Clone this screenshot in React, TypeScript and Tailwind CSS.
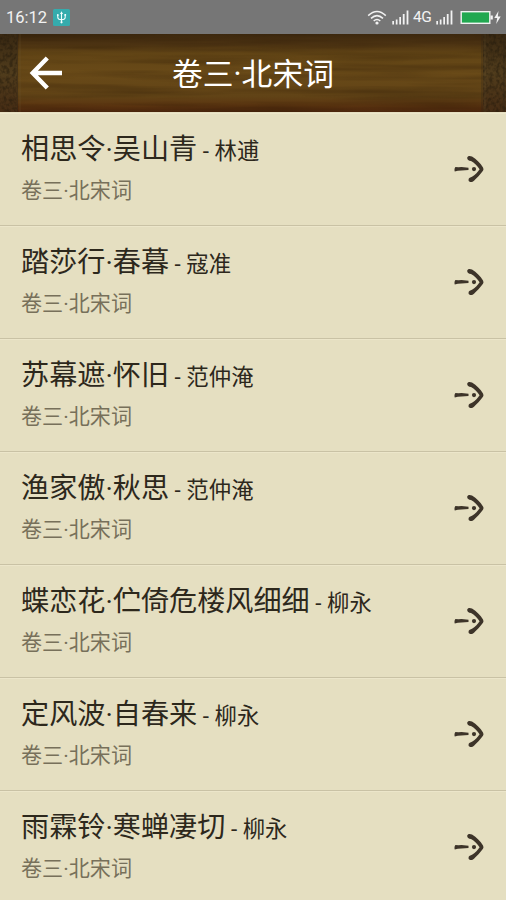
const VOLUME = "卷三·北宋词";

const POEMS = [
  { title: "相思令·吴山青", author: "林逋" },
  { title: "踏莎行·春暮", author: "寇准" },
  { title: "苏幕遮·怀旧", author: "范仲淹" },
  { title: "渔家傲·秋思", author: "范仲淹" },
  { title: "蝶恋花·伫倚危楼风细细", author: "柳永" },
  { title: "定风波·自春来", author: "柳永" },
  { title: "雨霖铃·寒蝉凄切", author: "柳永" },
];

function SignalIcon() {
  return (
    <svg width="17" height="15" viewBox="0 0 17 15" fill="#f2f2f2">
      <rect x="0.3" y="11" width="1.7" height="3.5" />
      <rect x="3.8" y="9.5" width="1.7" height="5" />
      <rect x="7.3" y="7" width="1.7" height="7.5" />
      <rect x="10.8" y="4" width="1.8" height="10.5" />
      <rect x="14.6" y="0.5" width="1.8" height="14" />
    </svg>
  );
}

function StatusBar() {
  return (
    <div className="flex h-[34px] items-center bg-[#767676] pl-1.5 pr-1 text-[#f2f2f2]">
      <span className="w-[42px] whitespace-nowrap pt-[3px] text-[16.5px] leading-none">16:12</span>
      <svg className="ml-[5px] mt-px" width="17" height="17" viewBox="0 0 17 17" fill="none" stroke="#f4ffff" strokeWidth="1.1">
        <rect width="17" height="17" rx="1.5" fill="#35acad" stroke="none" />
        <path d="M8.5 4v9.5M4.8 6v2.2q0 2.3 3.7 2.6M12.2 6v2.2q0 2.3-3.7 2.6" />
        <path d="M8.5 2.3 10 5H7z" fill="#f4ffff" stroke="none" />
        <circle cx="4.8" cy="6" r="0.9" fill="#f4ffff" stroke="none" />
        <rect x="11.4" y="5" width="1.7" height="1.7" fill="#f4ffff" stroke="none" />
        <circle cx="8.5" cy="13.3" r="1.1" fill="#f4ffff" stroke="none" />
      </svg>
      <div className="ml-auto flex items-center">
        <svg width="20" height="15" viewBox="0 0 20 15" fill="none" stroke="#f2f2f2" strokeWidth="1.5">
          <path d="M1.2 5.6Q10-2.6 18.8 5.6M4 8.4Q10 2.8 16 8.4M6.7 11Q10 8 13.3 11" />
          <circle cx="10" cy="13" r="1.6" fill="#f2f2f2" stroke="none" />
        </svg>
        <span className="ml-[5px]">
          <SignalIcon />
        </span>
        <span className="ml-1 w-[19px] whitespace-nowrap pt-px text-[15.5px] leading-none tracking-[-0.5px]">4G</span>
        <span className="ml-1">
          <SignalIcon />
        </span>
        <svg className="ml-[7px]" width="42" height="15" viewBox="0 0 42 15">
          <rect x="1.2" y="1.7" width="28.6" height="11.6" fill="#21a850" stroke="#f2f2f2" strokeWidth="1.4" />
          <rect x="30.5" y="5.5" width="2.3" height="4" fill="#f2f2f2" />
          <path d="M38.5 1 34.3 8h2.9l-1 6 4.5-7.6h-2.9z" fill="#f2f2f2" />
        </svg>
      </div>
    </div>
  );
}

function WoodTexture() {
  return (
    <svg className="absolute inset-0" width="506" height="78" viewBox="0 0 506 78" preserveAspectRatio="none">
      <defs>
        <linearGradient id="wood" x1="0" y1="0" x2="0" y2="1">
          <stop offset="0" stopColor="#3c280e" />
          <stop offset="0.12" stopColor="#4b3212" />
          <stop offset="0.25" stopColor="#614415" />
          <stop offset="0.5" stopColor="#694a18" />
          <stop offset="0.8" stopColor="#614316" />
          <stop offset="0.92" stopColor="#5b3410" />
          <stop offset="1" stopColor="#4c260d" />
        </linearGradient>
        <linearGradient id="edge" x1="0" y1="0" x2="0" y2="1">
          <stop offset="0" stopColor="#392812" />
          <stop offset="0.5" stopColor="#503c1c" />
          <stop offset="1" stopColor="#462c14" />
        </linearGradient>
        <filter id="grain" x="0" y="0" width="100%" height="100%" colorInterpolationFilters="sRGB">
          <feTurbulence type="fractalNoise" baseFrequency="0.006 0.13" numOctaves="3" seed="4" />
          <feColorMatrix values="0 0 0 0 0.16  0 0 0 0 0.09  0 0 0 0 0.02  1.6 0 0 0 -0.6" />
        </filter>
        <filter id="carving" x="0" y="0" width="100%" height="100%" colorInterpolationFilters="sRGB">
          <feTurbulence type="fractalNoise" baseFrequency="0.3 0.25" numOctaves="2" seed="9" />
          <feColorMatrix values="0 0 0 0 0.12  0 0 0 0 0.09  0 0 0 0 0.04  3 0 0 0 -1.2" />
        </filter>
      </defs>
      <rect width="506" height="78" fill="url(#wood)" />
      <rect width="506" height="78" filter="url(#grain)" opacity="0.4" />
      <rect width="17" height="78" fill="url(#edge)" />
      <rect x="483" width="23" height="78" fill="url(#edge)" />
      <rect width="17" height="78" filter="url(#carving)" opacity="0.45" />
      <rect x="483" width="23" height="78" filter="url(#carving)" opacity="0.45" />
      <path d="M17.5 0v78M482 0v78M504 0v78" stroke="#2d241a" strokeWidth="1" opacity="0.5" />
      <path d="M20 0v78M485 0v78" stroke="#705c36" strokeWidth="1" opacity="0.3" />
    </svg>
  );
}

function Header() {
  return (
    <header className="relative h-[78px] bg-[#604315]">
      <WoodTexture />
      <div className="relative grid h-full grid-cols-[64px_1fr_64px] items-center">
        <svg className="ml-[29px]" width="34" height="34" viewBox="0 0 34 34" fill="none" stroke="#ffffff" strokeWidth="4.4">
          <path d="M33 17H4M18.3 2 3.7 17l14.6 15" />
        </svg>
        <h1 className="pt-1 text-center text-[30.8px] leading-none text-white">{VOLUME}</h1>
      </div>
    </header>
  );
}

function BrushArrow() {
  return (
    <svg className="-mt-0.5" width="30" height="28" viewBox="0 0 30 28" fill="#3d3429">
      <path d="M1.4 12Q4.5 12.3 7.5 12L14.5 12.7V15L7.5 15.4Q3.5 15.4.8 16.6-.1 14 1.4 12Z" />
      <circle cx="20" cy="14.1" r="2.1" />
      <path d="M13.2 2.8C13.6.8 15.8.5 18 1.6 22.6 4.4 26.4 8.4 29 12.4Q30 14 29 15.8C26.2 19.8 22.8 22.8 20 25.8 18 27.9 14.6 27.3 14.5 24.9 14.6 23 16.4 22.5 18.4 21.6 21.4 19.6 23.8 17 25.6 14.2 23.2 10.8 20.4 8 17 6.1 14.6 5.9 13 4.6 13.2 2.8Z" />
    </svg>
  );
}

export default function App() {
  return (
    <div className="h-[900px] w-[506px] overflow-hidden bg-[#e5dfc1] font-[Roboto,'Noto_Sans_CJK_SC',sans-serif]">
      <StatusBar />
      <Header />
      <ul className="pt-px">
        {POEMS.map((poem) => (
          <li
            key={poem.title}
            className="flex h-[113px] items-center justify-between border-b border-b-[#c9c2a5] border-t border-t-[#ece6ca] pl-[21px] pr-[22px]"
          >
            <div className="whitespace-nowrap">
              <h2 className="text-[28.15px] leading-[39px] text-[#2d281c]">
                {poem.title}
                <span className="text-[22.4px]"> - {poem.author}</span>
              </h2>
              <p className="mt-0.5 text-[21.1px] leading-[36px] text-[#77705a]">{VOLUME}</p>
            </div>
            <BrushArrow />
          </li>
        ))}
      </ul>
    </div>
  );
}
